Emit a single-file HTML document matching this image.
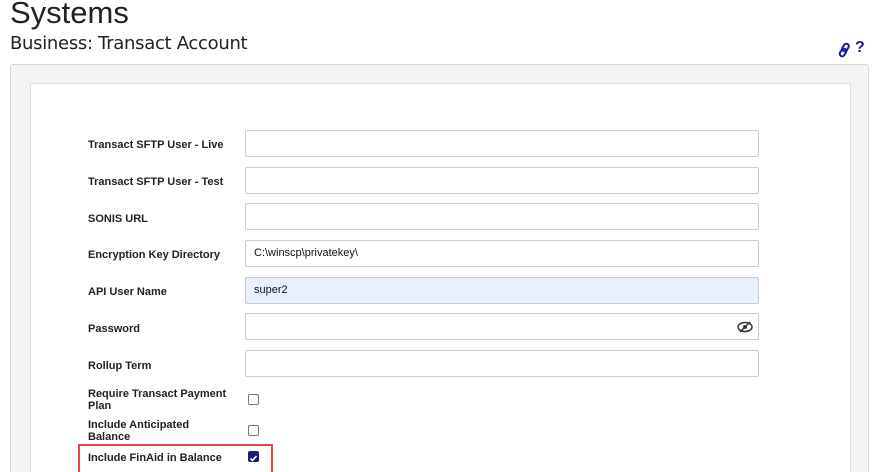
<!DOCTYPE html>
<html><head><style>
html,body{margin:0;width:876px;height:472px;overflow:hidden}
body{background:#fff;font-family:"Liberation Sans",Arial,sans-serif;position:relative}
.t{position:absolute;left:10px;top:-5px;font-size:31px;color:#222;font-family:"Liberation Sans",sans-serif}
.s{position:absolute;left:10px;top:33px;font-size:18px;color:#222;font-family:"DejaVu Sans","Liberation Sans",sans-serif;letter-spacing:-0.3px}
.outer{position:absolute;left:10px;top:64px;width:857px;height:420px;background:#f4f4f4;border:1px solid #d6d6d6;border-radius:3px}
.inner{position:absolute;left:30px;top:83px;width:819px;height:400px;background:#fff;border:1px solid #ddd}
.l{position:absolute;left:88px;font-size:11px;font-weight:bold;color:#222;line-height:12px}
.i{position:absolute;left:245px;border:1px solid #ccc;border-radius:2px;background:#fff;font-size:11px;line-height:25px;padding-left:8px;box-sizing:border-box;width:514px;height:27px;color:#111}
.cb{position:absolute;left:248px;width:9px;height:9px;border:1px solid #777;border-radius:2px;background:#fff}
</style></head><body>
<div class="t">Systems</div>
<div class="s">Business: Transact Account</div>
<svg style="position:absolute;left:838px;top:42px" width="14" height="16" viewBox="0 0 14 16"><g fill="none" stroke="#1a1a8c" stroke-width="2"><rect x="5" y="1.5" width="5" height="8" rx="2.5" transform="rotate(30 7.5 5.5)"/><rect x="2.5" y="6.5" width="5" height="8" rx="2.5" transform="rotate(30 5 10.5)"/></g></svg>
<div style="position:absolute;left:855px;top:39px;font-size:16px;font-weight:bold;color:#1a1a8c">?</div>
<div class="outer"></div>
<div class="inner"></div>
<div class="l" style="top:139px">Transact SFTP User - Live</div><div class="i" style="top:130px"></div>
<div class="l" style="top:176px">Transact SFTP User - Test</div><div class="i" style="top:167px"></div>
<div class="l" style="top:213px">SONIS URL</div><div class="i" style="top:203px"></div>
<div class="l" style="top:249px">Encryption Key Directory</div><div class="i" style="top:240px">C:\winscp\privatekey\</div>
<div class="l" style="top:286px">API User Name</div><div class="i" style="top:277px;background:#e8f0fe">super2</div>
<div class="l" style="top:323px">Password</div><div class="i" style="top:313px"></div>
<svg style="position:absolute;left:737px;top:321px" width="16" height="12" viewBox="0 0 16 12"><ellipse cx="8" cy="6" rx="7" ry="4.5" fill="none" stroke="#333" stroke-width="1.5"/><circle cx="8" cy="6" r="2" fill="#333"/><line x1="3" y1="11" x2="13" y2="1" stroke="#333" stroke-width="1.5"/></svg>
<div class="l" style="top:360px">Rollup Term</div><div class="i" style="top:350px"></div>
<div class="l" style="top:388px">Require Transact Payment<br>Plan</div><div class="cb" style="top:394px"></div>
<div class="l" style="top:419px">Include Anticipated<br>Balance</div><div class="cb" style="top:425px"></div>
<div style="position:absolute;left:78px;top:444px;border:2px solid #e04848;box-sizing:border-box;width:195px;height:30px"></div>
<div class="l" style="top:452px">Include FinAid in Balance</div>
<div style="position:absolute;left:248px;top:451px;width:11px;height:11px;background:#1b1b7a;border-radius:2px"><svg width="11" height="11" viewBox="0 0 11 11"><path d="M2.5 5.5l2 2 4-4.5" stroke="#fff" stroke-width="1.6" fill="none"/></svg></div>
</body></html>
